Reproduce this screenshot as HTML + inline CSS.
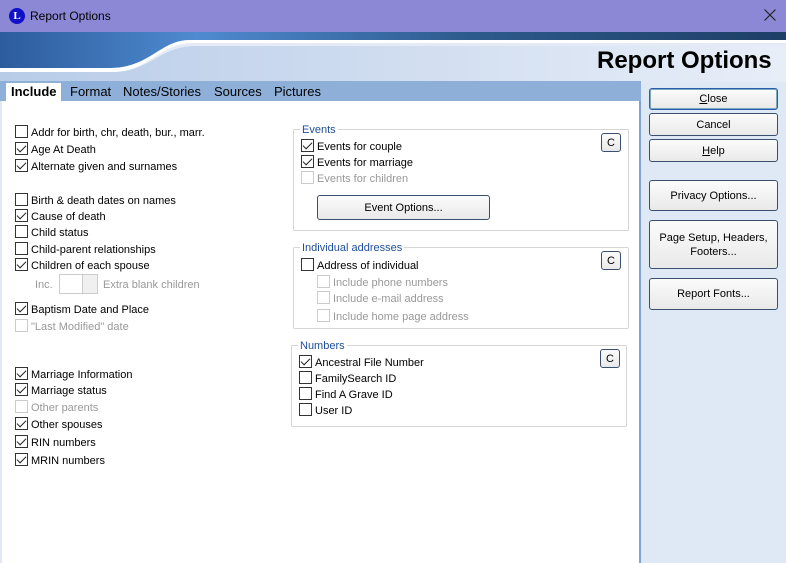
<!DOCTYPE html><html><head><style>
*{box-sizing:border-box}body{margin:0;width:786px;height:563px;overflow:hidden;background:#dfe8f5;font-family:"Liberation Sans",sans-serif;font-size:11px;color:#000;position:relative}
.a{position:absolute}
.cb{position:absolute;width:13px;height:13px;border:1px solid #333;background:#fff}
.cb.d{border-color:#ccc}
.cb.c::after{content:"";position:absolute;left:3px;top:0px;width:4px;height:8px;border:solid #222;border-width:0 1.5px 1.5px 0;transform:rotate(45deg)}
.t{position:absolute;white-space:nowrap;line-height:15px;margin-top:1px}
.g{color:#999}
.grp{position:absolute;border:1px solid #d5d5d5;border-radius:2px}
.lg{position:absolute;background:#fff;padding:0 2px;color:#1f4e9a;line-height:12px;margin-top:1px}
.btn{position:absolute;border:1px solid #3a4f6e;border-radius:3px;background:linear-gradient(#fbfbfb,#e9e9e9);text-align:center;display:flex;align-items:center;justify-content:center;font-size:11px;line-height:14px}
</style></head><body>
<div class="a" style="left:0;top:0;width:786px;height:32px;background:#8c88d6"></div>
<div class="a" style="left:9px;top:8px;width:16px;height:16px;border-radius:50%;background:#1010c8;color:#fff;font:bold 11px 'Liberation Serif',serif;text-align:center;line-height:16px">L</div>
<div class="t" style="left:30px;top:8px;font-size:12px">Report Options</div>
<svg class="a" style="left:764px;top:9px" width="12" height="12"><path d="M0.5 0.5L11.5 11.5M11.5 0.5L0.5 11.5" stroke="#222" stroke-width="1.2"/></svg>
<svg class="a" style="left:0;top:32px" width="786" height="50"><defs><linearGradient id="b" x1="0" x2="1"><stop offset="0" stop-color="#2c5c9c"/><stop offset=".25" stop-color="#4f8ad0"/><stop offset=".6" stop-color="#2d5a8c"/><stop offset="1" stop-color="#1e3f66"/></linearGradient><linearGradient id="l" x1="0" x2="1"><stop offset="0" stop-color="#b8cce8"/><stop offset="1" stop-color="#e8eef8"/></linearGradient></defs>
<rect width="786" height="50" fill="#e4ebf6"/><rect y="0" width="786" height="6" fill="url(#b)"/>
<path d="M0 6 H786 V8 H190 C160 8 150 36 110 36 H0Z" fill="url(#b)"/>
<path d="M0 40 H112 C150 40 160 14 195 14 H786 V50 H0Z" fill="url(#l)"/>
<path d="M0 36 H110 C150 36 160 8 190 8 H786 V11 H193 C158 11 150 40 112 40 H0Z" fill="#fff"/></svg>
<div class="t" style="left:597px;top:46px;font-size:24px;font-weight:bold;line-height:28px">Report Options</div>
<div class="a" style="left:0;top:81px;width:641px;height:20px;background:#8eafd8"></div>
<div class="a" style="left:6px;top:83px;width:55px;height:18px;background:#fff"></div>
<div class="t" style="left:11px;top:84px;font-size:13px;font-weight:bold;line-height:14px">Include</div>
<div class="t" style="left:70px;top:84px;font-size:13px;line-height:14px">Format</div>
<div class="t" style="left:123px;top:84px;font-size:13px;line-height:14px">Notes/Stories</div>
<div class="t" style="left:214px;top:84px;font-size:13px;line-height:14px">Sources</div>
<div class="t" style="left:274px;top:84px;font-size:13px;line-height:14px">Pictures</div>
<div class="a" style="left:2px;top:101px;width:639px;height:462px;background:#fff;border-right:2px solid #7fa3d2"></div>

<div class="cb" style="left:15px;top:125px"></div><div class="t" style="left:31px;top:125px">Addr for birth, chr, death, bur., marr.</div>
<div class="cb c" style="left:15px;top:142px"></div><div class="t" style="left:31px;top:142px">Age At Death</div>
<div class="cb c" style="left:15px;top:159px"></div><div class="t" style="left:31px;top:159px">Alternate given and surnames</div>
<div class="cb" style="left:15px;top:193px"></div><div class="t" style="left:31px;top:193px">Birth &amp; death dates on names</div>
<div class="cb c" style="left:15px;top:209px"></div><div class="t" style="left:31px;top:209px">Cause of death</div>
<div class="cb" style="left:15px;top:225px"></div><div class="t" style="left:31px;top:225px">Child status</div>
<div class="cb" style="left:15px;top:242px"></div><div class="t" style="left:31px;top:242px">Child-parent relationships</div>
<div class="cb c" style="left:15px;top:258px"></div><div class="t" style="left:31px;top:258px">Children of each spouse</div>
<div class="t g" style="left:35px;top:277px">Inc.</div>
<div class="a" style="left:59px;top:274px;width:23px;height:20px;border:1px solid #ccc;border-right:none"></div>
<div class="a" style="left:82px;top:274px;width:16px;height:20px;border:1px solid #ccc;background:#f0f0f0"></div>
<div class="t g" style="left:103px;top:277px">Extra blank children</div>
<div class="cb c" style="left:15px;top:302px"></div><div class="t" style="left:31px;top:302px">Baptism Date and Place</div>
<div class="cb d" style="left:15px;top:319px"></div><div class="t g" style="left:31px;top:319px">"Last Modified" date</div>
<div class="cb c" style="left:15px;top:367px"></div><div class="t" style="left:31px;top:367px">Marriage Information</div>
<div class="cb c" style="left:15px;top:383px"></div><div class="t" style="left:31px;top:383px">Marriage status</div>
<div class="cb d" style="left:15px;top:400px"></div><div class="t g" style="left:31px;top:400px">Other parents</div>
<div class="cb c" style="left:15px;top:417px"></div><div class="t" style="left:31px;top:417px">Other spouses</div>
<div class="cb c" style="left:15px;top:435px"></div><div class="t" style="left:31px;top:435px">RIN numbers</div>
<div class="cb c" style="left:15px;top:453px"></div><div class="t" style="left:31px;top:453px">MRIN numbers</div>

<div class="grp" style="left:293px;top:129px;width:336px;height:102px"></div><div class="lg" style="left:300px;top:123px">Events</div>
<div class="btn" style="left:601px;top:133px;width:20px;height:19px">C</div>
<div class="cb c" style="left:301px;top:139px"></div><div class="t" style="left:317px;top:139px">Events for couple</div>
<div class="cb c" style="left:301px;top:155px"></div><div class="t" style="left:317px;top:155px">Events for marriage</div>
<div class="cb d" style="left:301px;top:171px"></div><div class="t g" style="left:317px;top:171px">Events for children</div>
<div class="btn" style="left:317px;top:195px;width:173px;height:25px">Event Options...</div>

<div class="grp" style="left:293px;top:247px;width:336px;height:82px"></div><div class="lg" style="left:300px;top:241px">Individual addresses</div>
<div class="btn" style="left:601px;top:251px;width:20px;height:19px">C</div>
<div class="cb" style="left:301px;top:258px"></div><div class="t" style="left:317px;top:258px">Address of individual</div>
<div class="cb d" style="left:317px;top:275px"></div><div class="t g" style="left:333px;top:275px">Include phone numbers</div>
<div class="cb d" style="left:317px;top:291px"></div><div class="t g" style="left:333px;top:291px">Include e-mail address</div>
<div class="cb d" style="left:317px;top:309px"></div><div class="t g" style="left:333px;top:309px">Include home page address</div>

<div class="grp" style="left:291px;top:345px;width:336px;height:82px"></div><div class="lg" style="left:298px;top:339px">Numbers</div>
<div class="btn" style="left:600px;top:349px;width:20px;height:19px">C</div>
<div class="cb c" style="left:299px;top:355px"></div><div class="t" style="left:315px;top:355px">Ancestral File Number</div>
<div class="cb" style="left:299px;top:371px"></div><div class="t" style="left:315px;top:371px">FamilySearch ID</div>
<div class="cb" style="left:299px;top:387px"></div><div class="t" style="left:315px;top:387px">Find A Grave ID</div>
<div class="cb" style="left:299px;top:403px"></div><div class="t" style="left:315px;top:403px">User ID</div>

<div class="btn" style="left:649px;top:88px;width:129px;height:22px;border-color:#2a5db0;box-shadow:inset 0 0 0 1px #7ab"><u>C</u>lose</div>
<div class="btn" style="left:649px;top:113px;width:129px;height:23px">Cancel</div>
<div class="btn" style="left:649px;top:139px;width:129px;height:23px"><u>H</u>elp</div>
<div class="btn" style="left:649px;top:180px;width:129px;height:31px">Privacy Options...</div>
<div class="btn" style="left:649px;top:220px;width:129px;height:49px">Page Setup, Headers,<br>Footers...</div>
<div class="btn" style="left:649px;top:278px;width:129px;height:32px">Report Fonts...</div>
</body></html>
